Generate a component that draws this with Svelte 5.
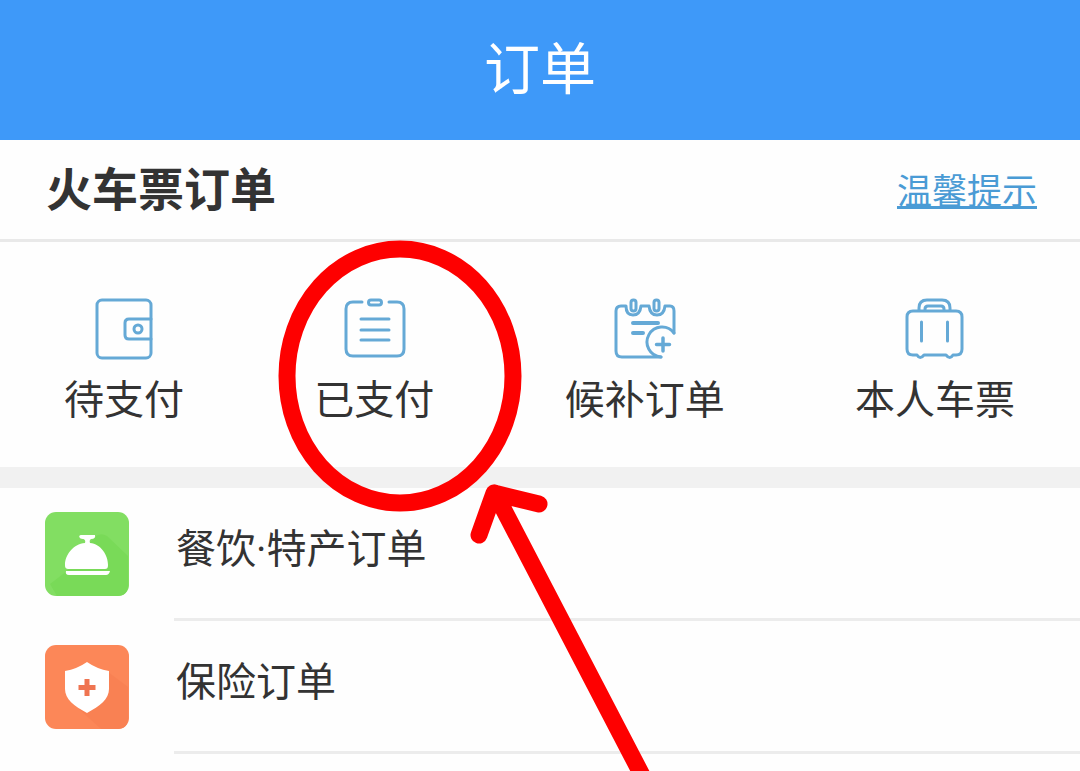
<script>
  const tabs = [
    { id: 'wallet', label: '待支付' },
    { id: 'paid', label: '已支付' },
    { id: 'standby', label: '候补订单' },
    { id: 'luggage', label: '本人车票' }
  ];
  const services = [
    { id: 'food', label: '餐饮·特产订单' },
    { id: 'insurance', label: '保险订单' }
  ];
</script>

<div class="page">
  <header class="topbar"><h1>订单</h1></header>

  <main>
    <section>
      <div class="section-head">
        <h2>火车票订单</h2>
        <a href="#tips">温馨提示</a>
      </div>
      <nav class="tabs" aria-label="火车票订单">
        {#each tabs as tab (tab.id)}
          <button type="button" class="tab">
            <svg class="tab-icon" viewBox="0 0 64 64" aria-hidden="true">
              {#if tab.id === 'wallet'}
                <rect x="5" y="3" width="54" height="58" rx="5" />
                <path d="M59 22H37q-4 0-4 4v12q0 4 4 4h22" />
                <circle cx="46" cy="32" r="4" />
              {:else if tab.id === 'paid'}
                <path d="M20 5H11q-7 0-7 7v40q0 7 7 7h44q7 0 7-7V12q0-7-7-7h-8" />
                <rect x="26.500" y="3" width="13" height="5" rx="2.500" />
                <path d="M19 22h28M19 33h28M19 43h28" />
              {:else if tab.id === 'standby'}
                <path d="M48 60H9q-6 0-6-6V14q0-5 5-5h5q0 9 7 9t8-9h8q1 9 8 9t8-9h5q4 0 4 5v22" />
                <rect x="18" y="3" width="5" height="11" rx="2.500" />
                <rect x="41" y="3" width="5" height="11" rx="2.500" />
                <path d="M20 26h25M20 36h10" stroke-width="4" />
                <path d="M61 36A15 15 0 1 0 48 60" />
                <path d="M50 41v13M43.500 47.500h13" stroke-width="3.500" />
              {:else}
                <path d="M16 13V11q0-8 8-8h15q8 0 8 8v2M22 13v-1q0-3 3-3h13q3 0 3 3v1" />
                <path d="M10 14h43q6 0 6 6v32q0 6-6 6h-3q-3 5-7 0H21q-4 5-7 0h-4q-6 0-6-6V20q0-6 6-6z" />
                <path d="M18.500 25v19M44.500 25v19" />
              {/if}
            </svg>
            <span>{tab.label}</span>
          </button>
        {/each}
      </nav>
    </section>

    <ul class="services">
      {#each services as item (item.id)}
        <li>
          <a href="#{item.id}">
            {#if item.id === 'food'}
              <svg class="badge" viewBox="0 0 84 84" aria-hidden="true">
                <rect width="84" height="84" rx="11" fill="#82de62" />
                <path d="M50 25Q55 20 62 24L83 44V73Q83 84 72 84H12L5 72L22 59Z" fill="#79da58" />
                <path d="M36 23h14q1 4-4 4-2 1-1 4c11 1 18 12 18 22 0 3-1 4-3 4H24c-3 0-4-1-4-4 0-10 8-21 20-22 1-3-1-4-2-4-4 0-5-4-2-4z" fill="#fff" />
                <path d="M21 59h44q-1 4-4 4H24q-4 0-3-4z" fill="#fff" />
              </svg>
            {:else}
              <svg class="badge" viewBox="0 0 84 84" aria-hidden="true">
                <rect width="84" height="84" rx="11" fill="#fc8758" />
                <path d="M63 27L83 42V73Q83 84 72 84H56L34 64Z" fill="#f98153" />
                <path d="M42 17q10 7 22 9v18c0 10-9 17-22 24-13-7-22-14-22-24V26q12-2 22-9z" fill="#fff" />
                <path d="M42 34v17M33.500 42.500h17" fill="none" stroke="#ef7451" stroke-width="5" />
              </svg>
            {/if}
            <span class="service-label">{item.label}</span>
          </a>
        </li>
      {/each}
    </ul>
  </main>

  <svg class="annotation" aria-hidden="true">
    <ellipse cx="400" cy="376" rx="113" ry="127" />
    <path d="M479 535L494 493L539 504M495 493L645 781" />
  </svg>
</div>

<style>
  :global(body) {
    margin: 0;
    background: #fefefe;
  }
  .page {
    position: relative;
    min-height: 100vh;
    overflow: hidden;
    color: #333;
    font-family: Roboto, "Noto Sans CJK SC", sans-serif;
  }
  h1,
  h2,
  ul {
    margin: 0;
    padding: 0;
  }
  .topbar {
    display: flex;
    align-items: center;
    justify-content: center;
    height: 140px;
    background: #3e99f9;
    color: #fff;
  }
  h1 {
    font-size: 56px;
    font-weight: 400;
    line-height: 80px;
  }
  .section-head {
    display: flex;
    align-items: center;
    justify-content: space-between;
    height: 99px;
    padding: 0 43px 0 46px;
    border-bottom: 3px solid #e9e9e9;
  }
  h2 {
    font-size: 46px;
    font-weight: 700;
    line-height: 64px;
  }
  .section-head a {
    padding-top: 6px;
    color: #4a9bd5;
    font-size: 35px;
    line-height: 48px;
    text-underline-offset: 2px;
    text-decoration-thickness: 3px;
    text-decoration-skip-ink: none;
  }
  .tabs {
    display: flex;
    justify-content: space-between;
    padding: 55px 65px 38px 64px;
    border-bottom: 21px solid #f1f1f1;
  }
  .tab {
    display: flex;
    flex-direction: column;
    align-items: center;
    gap: 12px;
    padding: 0;
    border: 0;
    background: none;
    color: inherit;
    font: inherit;
    font-size: 40px;
    line-height: 56px;
    cursor: pointer;
  }
  .tab-icon {
    width: 64px;
    height: 64px;
    fill: none;
    stroke: #65a9d6;
    stroke-width: 3;
    stroke-linecap: round;
    stroke-linejoin: round;
  }
  .services {
    list-style: none;
  }
  .services a {
    display: flex;
    padding-left: 45px;
    color: inherit;
    text-decoration: none;
  }
  .badge {
    flex: none;
    width: 84px;
    height: 84px;
    margin: 24px 45px 0 0;
  }
  .service-label {
    flex: 1;
    padding: 34px 0 40px 2px;
    border-bottom: 3px solid #ececec;
    font-size: 40px;
    line-height: 56px;
  }
  .annotation {
    position: absolute;
    inset: 0;
    width: 100%;
    height: 100%;
    pointer-events: none;
    fill: none;
    stroke: #fe0000;
    stroke-width: 17;
    stroke-linecap: round;
    stroke-linejoin: round;
  }
</style>
